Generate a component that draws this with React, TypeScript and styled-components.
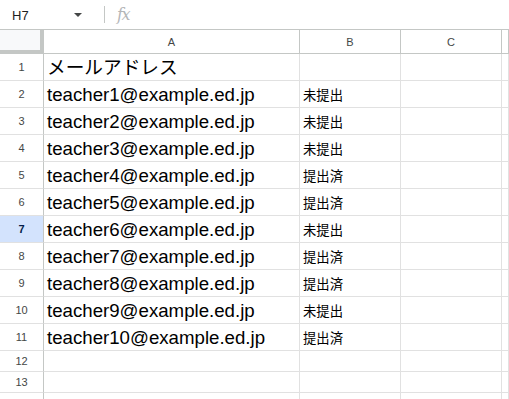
import React from "react";
import styled, { createGlobalStyle } from "styled-components";

const GlobalStyle = createGlobalStyle`
  html, body {
    margin: 0;
    padding: 0;
    background: #ffffff;
    font-family: "Liberation Sans", Arial, sans-serif;
    overflow: hidden;
  }
`;

const Page = styled.div`
  width: 509px;
  height: 399px;
  overflow: hidden;
  background: #ffffff;
`;

const FormulaBar = styled.div`
  display: flex;
  align-items: center;
  height: 30px;
  border-bottom: 1px solid #c4c7c5;
  box-sizing: border-box;
`;

const NameBox = styled.div`
  display: flex;
  align-items: center;
  justify-content: space-between;
  width: 93px;
  padding: 1px 11px 0 12px;
  box-sizing: border-box;
  font-size: 13px;
  color: #1f1f1f;
`;

const Caret = styled.span`
  width: 0;
  height: 0;
  border-left: 4px solid transparent;
  border-right: 4px solid transparent;
  border-top: 4px solid #444746;
`;

const Divider = styled.span`
  width: 1px;
  height: 17px;
  background: #c4c7c5;
  margin: 0 11px 0 11px;
`;

const Fx = styled.span`
  font-family: "DejaVu Serif", "Liberation Serif", serif;
  font-style: italic;
  font-size: 16px;
  color: #b4b6b8;
  letter-spacing: -1.5px;
  margin-left: 1px;
`;

const Grid = styled.div`
  display: grid;
  grid-template-columns: 44px 256px 101px 101px 1fr;
`;

const Corner = styled.div`
  height: 24px;
  box-sizing: border-box;
  background: #f8f9fa;
  border-right: 4px solid #c4c7c5;
  border-bottom: 4px solid #c4c7c5;
`;

const ColHeader = styled.div`
  height: 24px;
  box-sizing: border-box;
  display: flex;
  align-items: center;
  justify-content: center;
  background: #ffffff;
  border-right: 1px solid #c4c7c5;
  border-bottom: 1px solid #c4c7c5;
  font-size: 11px;
  color: #444746;
`;

const RowHeader = styled.div<{ $h: number; $active?: boolean }>`
  height: ${(p) => p.$h}px;
  box-sizing: border-box;
  display: flex;
  align-items: center;
  justify-content: center;
  background: ${(p) => (p.$active ? "#d3e3fd" : "#ffffff")};
  border-right: 1px solid #c4c7c5;
  border-bottom: 1px solid #e1e1e1;
  font-size: 11px;
  font-weight: ${(p) => (p.$active ? 700 : 400)};
  color: ${(p) => (p.$active ? "#041e49" : "#444746")};
`;

const Cell = styled.div<{ $h: number; $small?: boolean }>`
  height: ${(p) => p.$h}px;
  box-sizing: border-box;
  display: flex;
  align-items: flex-end;
  padding: 0 3px ${(p) => (p.$small ? 4 : 1)}px;
  border-right: 1px solid #e1e1e1;
  border-bottom: 1px solid #e1e1e1;
  font-family: ${(p) =>
    p.$small
      ? '"Noto Sans CJK JP", sans-serif'
      : '"Liberation Sans", "Noto Sans CJK JP", sans-serif'};
  font-size: ${(p) => (p.$small ? "13.33px" : "18.67px")};
  line-height: ${(p) => (p.$small ? "16px" : "22px")};
  color: #000000;
  white-space: nowrap;
  overflow: hidden;
`;

const rows: { a: string; b: string }[] = [
  { a: "メールアドレス", b: "" },
  { a: "teacher1@example.ed.jp", b: "未提出" },
  { a: "teacher2@example.ed.jp", b: "未提出" },
  { a: "teacher3@example.ed.jp", b: "未提出" },
  { a: "teacher4@example.ed.jp", b: "提出済" },
  { a: "teacher5@example.ed.jp", b: "提出済" },
  { a: "teacher6@example.ed.jp", b: "未提出" },
  { a: "teacher7@example.ed.jp", b: "提出済" },
  { a: "teacher8@example.ed.jp", b: "提出済" },
  { a: "teacher9@example.ed.jp", b: "未提出" },
  { a: "teacher10@example.ed.jp", b: "提出済" },
  { a: "", b: "" },
  { a: "", b: "" },
  { a: "", b: "" },
];

const App: React.FC = () => {
  return (
    <Page>
      <GlobalStyle />
      <FormulaBar>
        <NameBox>
          <span>H7</span>
          <Caret />
        </NameBox>
        <Divider />
        <Fx>fx</Fx>
      </FormulaBar>
      <Grid>
        <Corner />
        <ColHeader>A</ColHeader>
        <ColHeader>B</ColHeader>
        <ColHeader>C</ColHeader>
        <ColHeader />
        {rows.map((r, i) => {
          const h = i < 11 ? 27 : 21;
          const n = i + 1;
          return (
            <React.Fragment key={n}>
              <RowHeader $h={h} $active={n === 7}>
                {n <= 13 ? n : ""}
              </RowHeader>
              <Cell $h={h}>{r.a}</Cell>
              <Cell $h={h} $small>
                {r.b}
              </Cell>
              <Cell $h={h} />
              <Cell $h={h} />
            </React.Fragment>
          );
        })}
      </Grid>
    </Page>
  );
};

export default App;
